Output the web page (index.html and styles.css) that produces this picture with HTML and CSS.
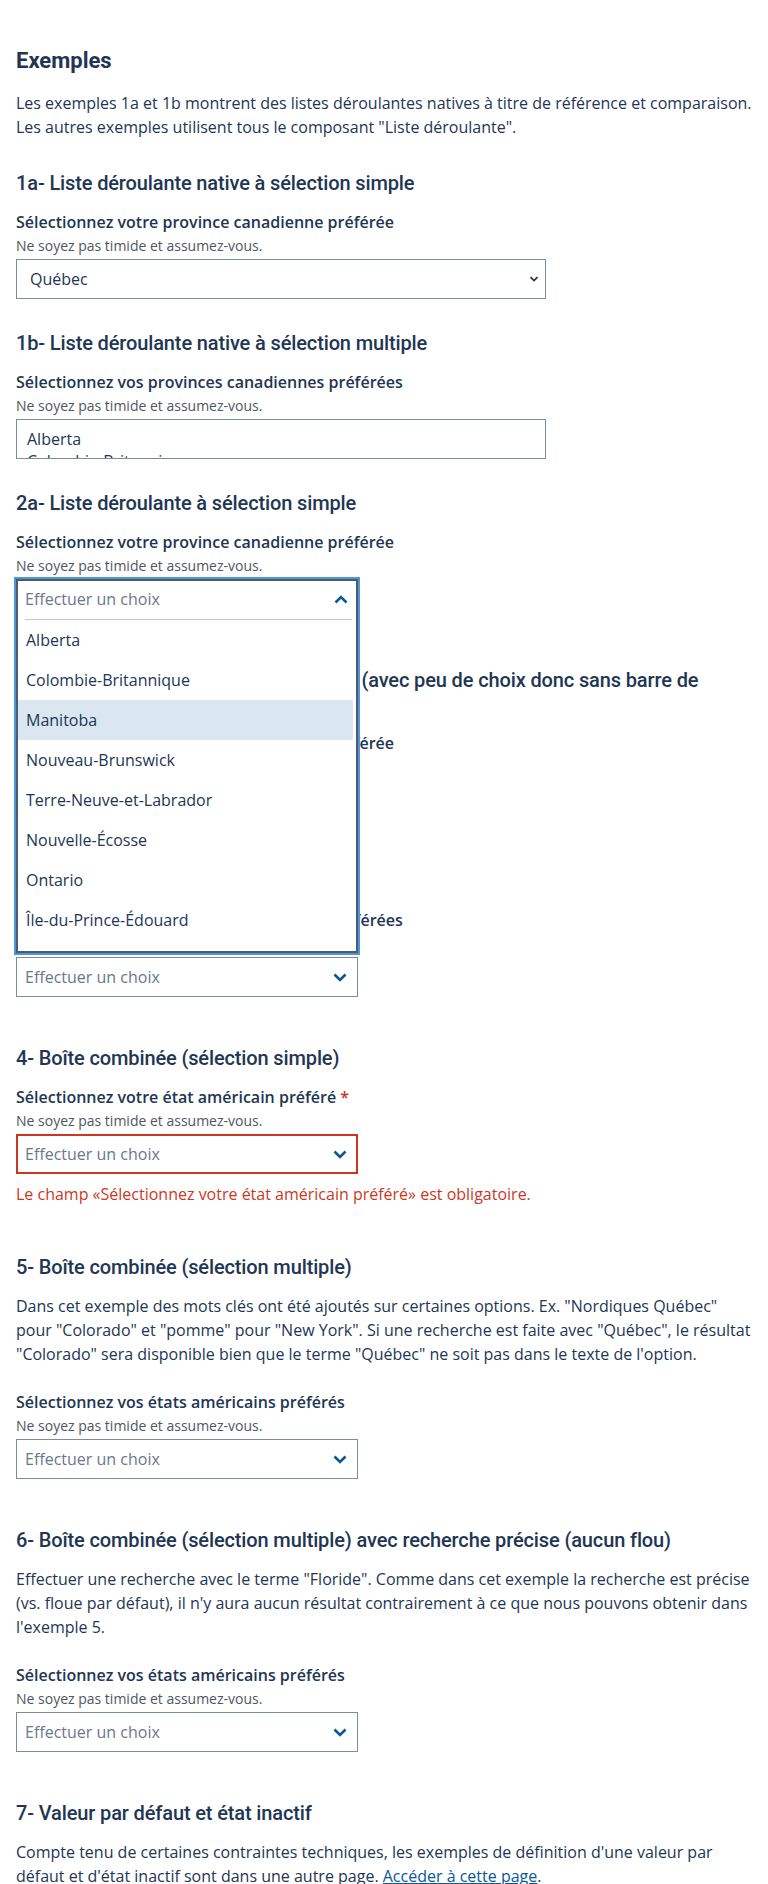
FILE: index.html
```html
<!DOCTYPE html>
<html lang="fr">
<head>
<meta charset="utf-8">
<title>Exemples</title>
<link rel="stylesheet" href="styles.css">
</head>
<body>
<main class="page">
  <h2 class="title">Exemples</h2>
  <p class="text">Les exemples 1a et 1b montrent des listes déroulantes natives à titre de référence et comparaison. Les autres exemples utilisent tous le composant "Liste déroulante".</p>

  <section class="section">
    <h3 class="sub">1a- Liste déroulante native à sélection simple</h3>
    <div class="label">Sélectionnez votre province canadienne préférée</div>
    <div class="hint">Ne soyez pas timide et assumez-vous.</div>
    <div class="native">
      <span>Québec</span>
      <svg class="native-chev" width="10" height="8" viewBox="0 0 10 8"><path d="M1.5 2.2 L5 5.6 L8.5 2.2" fill="none" stroke="#223654" stroke-width="1.8"/></svg>
    </div>
  </section>

  <section class="section">
    <h3 class="sub">1b- Liste déroulante native à sélection multiple</h3>
    <div class="label">Sélectionnez vos provinces canadiennes préférées</div>
    <div class="hint">Ne soyez pas timide et assumez-vous.</div>
    <div class="native-multi">
      <div class="nm-opt">Alberta</div>
      <div class="nm-opt">Colombie-Britannique</div>
      <div class="nm-opt">Manitoba</div>
    </div>
  </section>

  <section class="section">
    <h3 class="sub">2a- Liste déroulante à sélection simple</h3>
    <div class="label">Sélectionnez votre province canadienne préférée</div>
    <div class="hint">Ne soyez pas timide et assumez-vous.</div>
    <div class="combo-wrap">
      <div class="combo">
        <span class="placeholder">Effectuer un choix</span>
        <svg class="chev" width="14" height="9" viewBox="0 0 14 9"><path d="M1.5 1.5 L7 7 L12.5 1.5" fill="none" stroke="#095797" stroke-width="2.6"/></svg>
      </div>
      <div class="panel">
        <div class="panel-head">
          <span class="placeholder">Effectuer un choix</span>
          <svg class="chev" width="14" height="9" viewBox="0 0 14 9"><path d="M1.5 7.5 L7 2 L12.5 7.5" fill="none" stroke="#095797" stroke-width="2.6"/></svg>
        </div>
        <div class="panel-sep"></div>
        <ul class="options">
          <li class="opt">Alberta</li>
          <li class="opt">Colombie-Britannique</li>
          <li class="opt active">Manitoba</li>
          <li class="opt">Nouveau-Brunswick</li>
          <li class="opt">Terre-Neuve-et-Labrador</li>
          <li class="opt">Nouvelle-Écosse</li>
          <li class="opt">Ontario</li>
          <li class="opt">Île-du-Prince-Édouard</li>
        </ul>
      </div>
    </div>
  </section>

  <section class="section">
    <h3 class="sub">2b- Liste déroulante à sélection simple (avec peu de choix donc sans barre de défilement)</h3>
    <div class="label">Sélectionnez votre province canadienne préférée</div>
    <div class="hint">Ne soyez pas timide et assumez-vous.</div>
    <div class="combo-wrap">
      <div class="combo">
        <span class="placeholder">Effectuer un choix</span>
        <svg class="chev" width="14" height="9" viewBox="0 0 14 9"><path d="M1.5 1.5 L7 7 L12.5 1.5" fill="none" stroke="#095797" stroke-width="2.6"/></svg>
      </div>
    </div>
  </section>

  <section class="section">
    <h3 class="sub">3- Liste déroulante à sélection multiple</h3>
    <div class="label">Sélectionnez vos provinces canadiennes préférées</div>
    <div class="hint">Ne soyez pas timide et assumez-vous.</div>
    <div class="combo-wrap">
      <div class="combo">
        <span class="placeholder">Effectuer un choix</span>
        <svg class="chev" width="14" height="9" viewBox="0 0 14 9"><path d="M1.5 1.5 L7 7 L12.5 1.5" fill="none" stroke="#095797" stroke-width="2.6"/></svg>
      </div>
    </div>
  </section>

  <section class="section">
    <h3 class="sub">4- Boîte combinée (sélection simple)</h3>
    <div class="label">Sélectionnez votre état américain préféré <span class="req">*</span></div>
    <div class="hint">Ne soyez pas timide et assumez-vous.</div>
    <div class="combo-wrap combo-wrap-err">
      <div class="combo combo-error">
        <span class="placeholder">Effectuer un choix</span>
        <svg class="chev" width="14" height="9" viewBox="0 0 14 9"><path d="M1.5 1.5 L7 7 L12.5 1.5" fill="none" stroke="#095797" stroke-width="2.6"/></svg>
      </div>
      <div class="error">Le champ «Sélectionnez votre état américain préféré» est obligatoire.</div>
    </div>
  </section>

  <section class="section">
    <h3 class="sub">5- Boîte combinée (sélection multiple)</h3>
    <p class="text desc">Dans cet exemple des mots clés ont été ajoutés sur certaines options. Ex. "Nordiques Québec" pour "Colorado" et "pomme" pour "New York". Si une recherche est faite avec "Québec", le résultat "Colorado" sera disponible bien que le terme "Québec" ne soit pas dans le texte de l'option.</p>
    <div class="label">Sélectionnez vos états américains préférés</div>
    <div class="hint">Ne soyez pas timide et assumez-vous.</div>
    <div class="combo-wrap">
      <div class="combo">
        <span class="placeholder">Effectuer un choix</span>
        <svg class="chev" width="14" height="9" viewBox="0 0 14 9"><path d="M1.5 1.5 L7 7 L12.5 1.5" fill="none" stroke="#095797" stroke-width="2.6"/></svg>
      </div>
    </div>
  </section>

  <section class="section">
    <h3 class="sub">6- Boîte combinée (sélection multiple) avec recherche précise (aucun flou)</h3>
    <p class="text desc">Effectuer une recherche avec le terme "Floride". Comme dans cet exemple la recherche est précise (vs. floue par défaut), il n'y aura aucun résultat contrairement à ce que nous pouvons obtenir dans l'exemple 5.</p>
    <div class="label">Sélectionnez vos états américains préférés</div>
    <div class="hint">Ne soyez pas timide et assumez-vous.</div>
    <div class="combo-wrap">
      <div class="combo">
        <span class="placeholder">Effectuer un choix</span>
        <svg class="chev" width="14" height="9" viewBox="0 0 14 9"><path d="M1.5 1.5 L7 7 L12.5 1.5" fill="none" stroke="#095797" stroke-width="2.6"/></svg>
      </div>
    </div>
  </section>

  <section class="section">
    <h3 class="sub">7- Valeur par défaut et état inactif</h3>
    <p class="text desc">Compte tenu de certaines contraintes techniques, les exemples de définition d'une valeur par défaut et d'état inactif sont dans une autre page. <a class="link" href="#">Accéder à cette page</a>.</p>
  </section>
</main>
</body>
</html>
```

FILE: styles.css
```css
* { box-sizing: border-box; }
html, body { margin: 0; padding: 0; background: #ffffff; }
body {
  font-family: "Open Sans", "Liberation Sans", sans-serif;
  color: #223654;
  font-size: 16px;
  line-height: 24px;
}
.page {
  padding: 47px 12px 40px 16px;
}
.title {
  font-family: Roboto, "Liberation Sans", sans-serif;
  font-weight: 700;
  font-size: 22px;
  line-height: 28px;
  margin: 0 0 16px;
  color: #223654;
}
.text {
  margin: 0;
  font-size: 16px;
  line-height: 24px;
}
.section { padding-top: 32px; }
.sub {
  font-family: Roboto, "Liberation Sans", sans-serif;
  font-weight: 500;
  font-size: 20px;
  letter-spacing: -0.13px;
  line-height: 24px;
  margin: 0 0 15px;
  color: #223654;
}
.desc { margin-bottom: 24px; }
.label {
  font-weight: 600;
  font-size: 16px;
  line-height: 24px;
}
.req { color: #cb381f; }
.hint {
  font-size: 14px;
  line-height: 20px;
  margin-top: 2px;
  color: #4e5662;
}
.native {
  margin-top: 3px;
  width: 530px;
  height: 40px;
  border: 1px solid #808a9d;
  display: flex;
  align-items: center;
  justify-content: space-between;
  padding: 0 6px 0 13px;
  font-size: 16px;
}
.native-multi {
  margin-top: 3px;
  width: 530px;
  height: 40px;
  border: 1px solid #808a9d;
  overflow: hidden;
  padding: 8px 10px 0;
}
.nm-opt { line-height: 22px; }
.combo-wrap {
  position: relative;
  margin-top: 3px;
  margin-bottom: 17px;
  width: 342px;
}
.combo {
  height: 40px;
  border: 1px solid #808a9d;
  display: flex;
  align-items: center;
  justify-content: space-between;
  padding: 0 10px 0 8px;
}
.combo-error { border: 2px solid #cb381f; padding: 0 9px 0 7px; }
.placeholder { color: #6b778a; font-size: 16px; }
.chev { display: block; }
.error {
  margin-top: 8px;
  width: 700px;
  color: #cb381f;
  font-size: 16px;
  line-height: 24px;
}
.panel {
  position: absolute;
  left: -2px;
  top: -2px;
  width: 346px;
  height: 378px;
  background: #ffffff;
  border: 2px solid #4a98d9;
  z-index: 10;
}
.panel::before {
  content: "";
  position: absolute;
  inset: 0;
  border: 2px solid #4e5a6e;
  pointer-events: none;
  z-index: 2;
}
.panel-head {
  height: 40px;
  display: flex;
  align-items: center;
  justify-content: space-between;
  padding: 0 10px 0 9px;
}
.panel-sep {
  height: 1px;
  background: #c5cad2;
  margin: 0 6px 0 9px;
}
.options {
  list-style: none;
  margin: 0;
  padding: 0 5px 0 2px;
}
.opt {
  height: 40px;
  line-height: 40px;
  padding-left: 8px;
  font-size: 16px;
  color: #223654;
}
.opt.active { background: #dae6f0; }
.link { color: #095797; text-decoration: underline; }
```
